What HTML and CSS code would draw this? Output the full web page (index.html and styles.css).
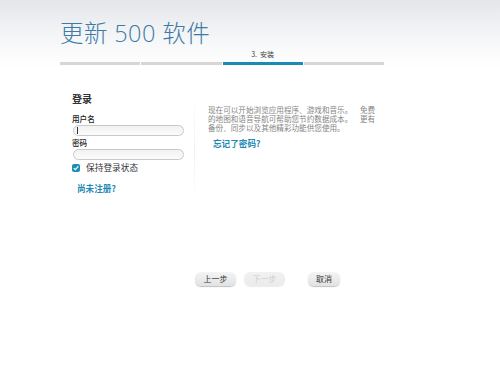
FILE: index.html
```html
<!DOCTYPE html>
<html lang="zh-CN">
<head>
<meta charset="utf-8">
<link rel="stylesheet" href="styles.css">
</head>
<body>
<div class="page">
  <h1 class="title">更新 500 软件</h1>
  <div class="steps">
    <div class="step"></div>
    <div class="step"></div>
    <div class="step active"><span class="step-label">3.&nbsp; 安装</span></div>
    <div class="step"></div>
  </div>
  <div class="content">
    <div class="login">
      <div class="login-title">登录</div>
      <div class="field-label">用户名</div>
      <div class="input"><span class="caret"></span></div>
      <div class="field-label pw">密码</div>
      <div class="input"></div>
      <div class="remember">
        <span class="check"><svg width="8" height="8" viewBox="0 0 8 8"><path d="M1.8 4.1 L3.4 5.6 L6.3 2.4" fill="none" stroke="#fff" stroke-width="1.3"/></svg></span>
        <span>保持登录状态</span>
      </div>
      <a class="link register">尚未注册?</a>
    </div>
    <div class="divider"></div>
    <div class="info">
      <p class="desc">现在可以开始浏览应用程序、游戏和音乐。 免费的地图和语音导航可帮助您节约数据成本。 更有备份、同步以及其他精彩功能供您使用。</p>
      <a class="link forgot">忘记了密码?</a>
    </div>
  </div>
  <div class="buttons">
    <button class="btn">上一步</button>
    <button class="btn disabled">下一步</button>
    <button class="btn cancel">取消</button>
  </div>
</div>
</body>
</html>
```

FILE: styles.css
```css
html, body {
  margin: 0;
  padding: 0;
}
body {
  width: 500px;
  height: 365px;
  background: linear-gradient(to bottom, #e4e6ea 0px, #f6f7f8 40px, #ffffff 68px, #ffffff 100%);
  font-family: "Noto Sans CJK SC", "Noto Sans", sans-serif;
  overflow: hidden;
}
.page {
  padding-left: 60px;
  width: 324px;
}
.title {
  margin: 0;
  padding-top: 18px;
  height: 30px;
  font-size: 23.5px;
  line-height: 30px;
  font-weight: 300;
  color: #3d7aa8;
  font-family: "Open Sans", "Noto Sans CJK SC", sans-serif;
  letter-spacing: 0.4px;
}
.steps {
  margin-top: 14px;
  display: flex;
  gap: 1px;
}
.step {
  flex: 1;
  height: 3px;
  background: #d6d6d6;
  position: relative;
}
.step.active {
  background: #1a8bb6;
}
.step-label {
  position: absolute;
  left: 0;
  right: 0;
  bottom: 6px;
  text-align: center;
  font-size: 7px;
  line-height: 9px;
  color: #444;
  white-space: nowrap;
}
.content {
  display: flex;
  margin-top: 27px;
  padding-left: 12px;
}
.login {
  width: 113px;
  height: 105px;
}
.divider {
  margin-top: 12px;
  width: 1px;
  height: 90px;
  background: linear-gradient(#fcfcfc, #f2f2f2 50%, #fcfcfc);
  margin-left: 9px;
}
.login-title {
  font-size: 10px;
  line-height: 14px;
  font-weight: 700;
  color: #333;
}
.field-label {
  margin-top: 8px;
  font-size: 7.6px;
  line-height: 9px;
  color: #222;
  font-weight: 500;
}
.field-label.pw {
  margin-top: 2px;
}
.input {
  margin-top: 2px;
  margin-left: 1px;
  width: 109px;
  height: 9px;
  border: 1px solid #c9c9c9;
  border-radius: 6px;
  background: linear-gradient(#f2f2f2, #fbfbfb);
  position: relative;
}
.caret {
  position: absolute;
  left: 3px;
  top: 1px;
  width: 1px;
  height: 7px;
  background: #333;
}
.remember {
  margin-top: 2px;
  display: flex;
  align-items: center;
  gap: 6px;
  font-size: 8.7px;
  line-height: 11px;
  color: #333;
}
.check {
  width: 8px;
  height: 8px;
  border-radius: 2px;
  background: #1e8fb3;
  display: flex;
}
.link {
  display: block;
  color: #1d8ab3;
  font-weight: 700;
  font-size: 8.6px;
  line-height: 11px;
}
.register {
  margin-top: 10px;
  margin-left: 5px;
}
.info {
  padding-left: 13px;
  padding-top: 13px;
  width: 172px;
}
.desc {
  margin: 0;
  font-size: 7.6px;
  line-height: 9px;
  word-spacing: 6px;
  color: #858585;
  word-break: break-all;
}
.forgot {
  margin-top: 6px;
  margin-left: 5px;
}
.buttons {
  margin-top: 75px;
  padding-left: 135px;
  display: flex;
  gap: 8px;
}
.btn {
  width: 41px;
  height: 14px;
  padding: 0;
  border: none;
  border-radius: 6px;
  background: linear-gradient(#f4f4f4, #e2e2e2);
  box-shadow: 0 1px 1px rgba(0,0,0,0.25);
  font-family: "Noto Sans CJK SC", sans-serif;
  font-size: 8px;
  line-height: 14px;
  color: #333;
}
.btn.disabled {
  color: #cfcfcf;
  background: linear-gradient(#f2f2f2, #ebebeb);
  box-shadow: 0 1px 1px rgba(0,0,0,0.08);
}
.btn.cancel {
  margin-left: 15px;
  width: 32px;
}
```
